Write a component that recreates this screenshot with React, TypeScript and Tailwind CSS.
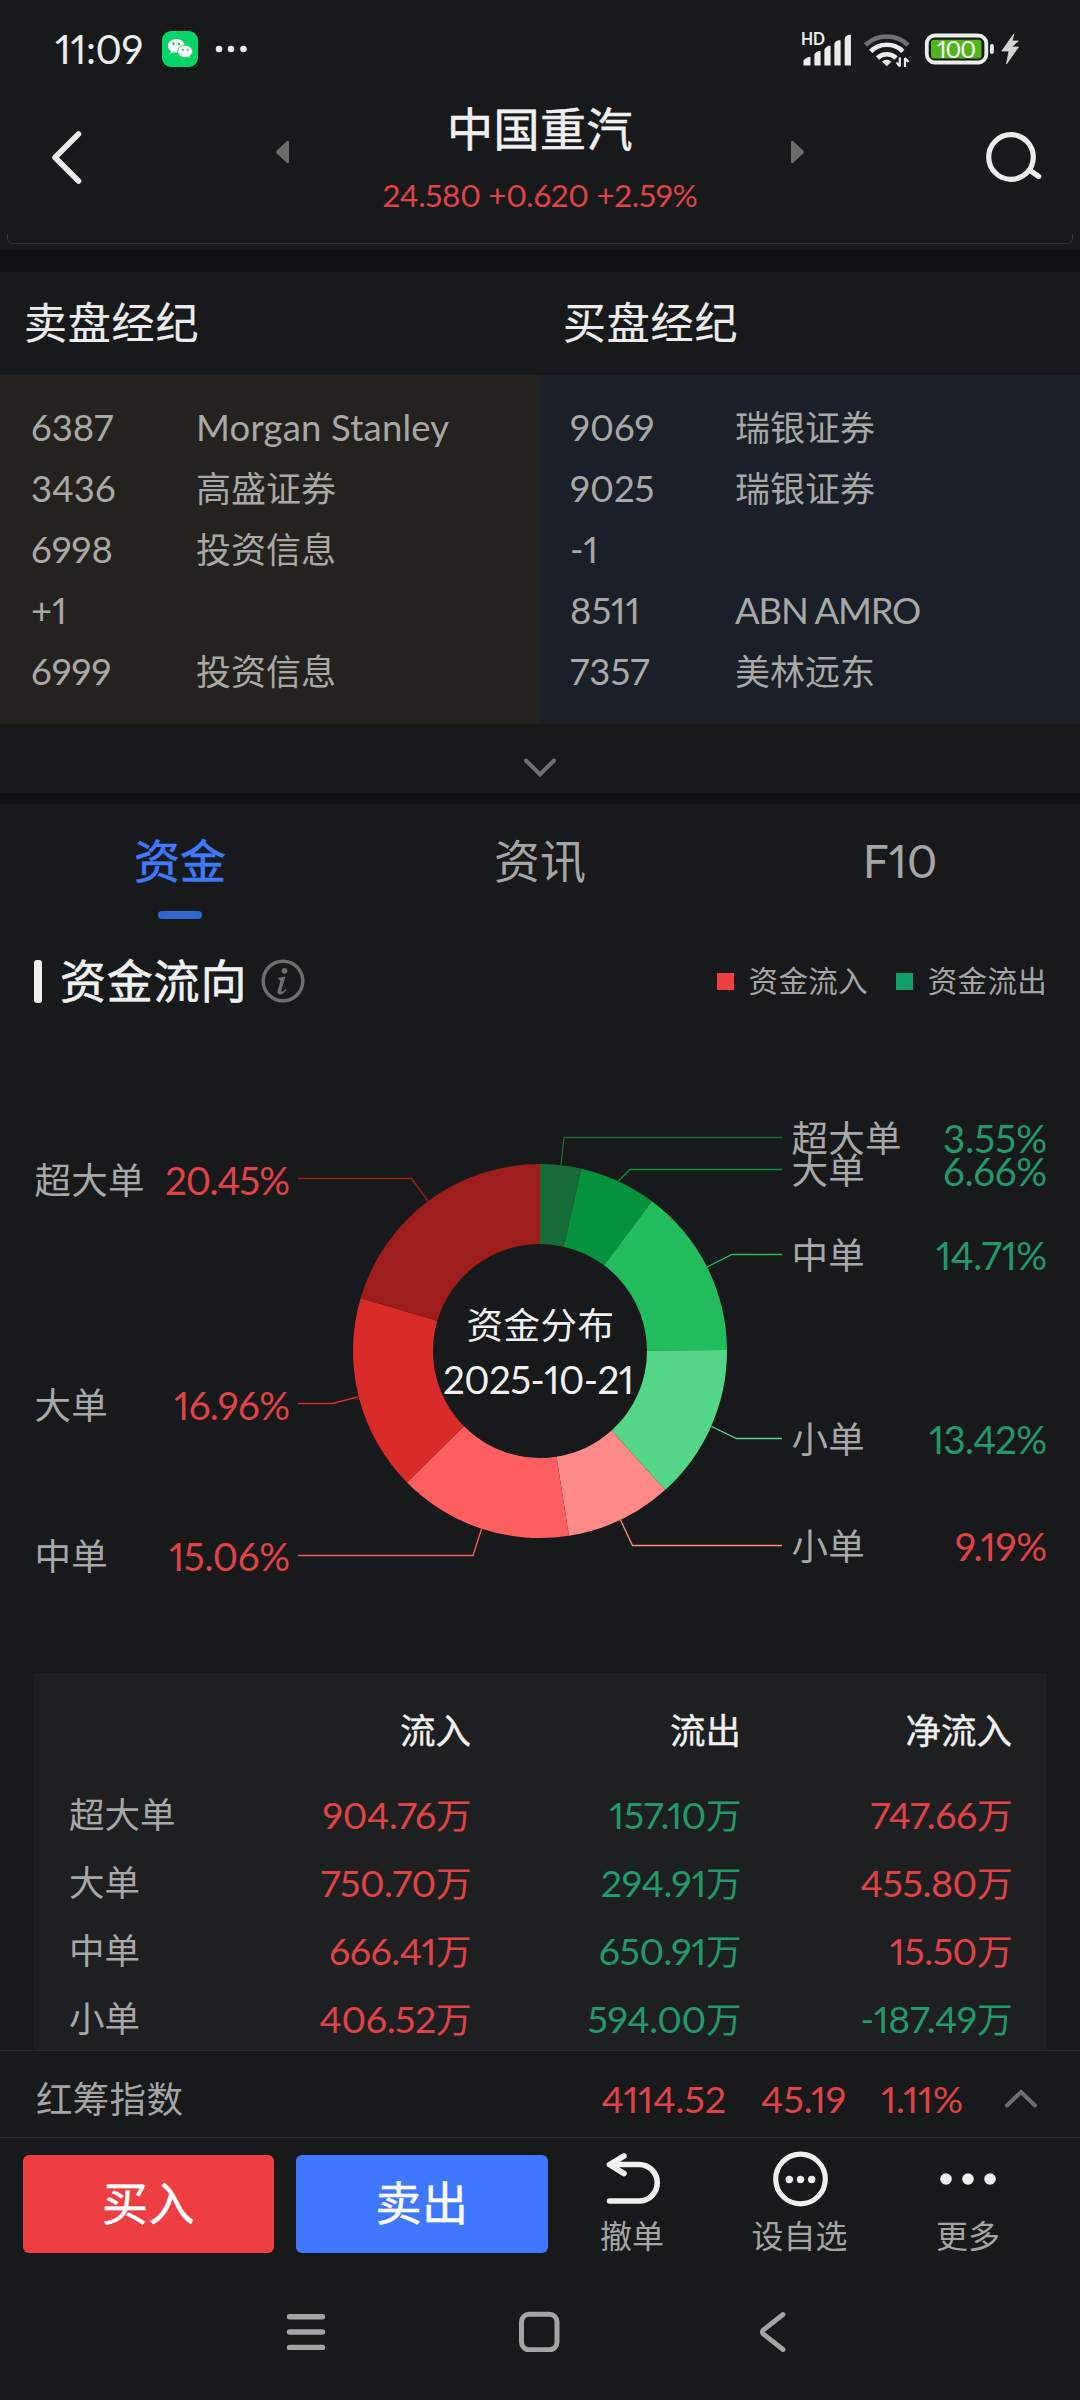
type Broker = { code: string; name?: string };

const sellBrokers: Broker[] = [
  { code: "6387", name: "Morgan Stanley" },
  { code: "3436", name: "高盛证券" },
  { code: "6998", name: "投资信息" },
  { code: "+1" },
  { code: "6999", name: "投资信息" },
];

const buyBrokers: Broker[] = [
  { code: "9069", name: "瑞银证券" },
  { code: "9025", name: "瑞银证券" },
  { code: "-1" },
  { code: "8511", name: "ABN AMRO" },
  { code: "7357", name: "美林远东" },
];

const RED = "#e04347";
const GREEN = "#22996a";

// slices run clockwise from 12 o'clock, y values are relative to the chart box
const slices = [
  { name: "超大单", value: 3.55, fill: "#156c36", text: GREEN, width: 104, y: 88, line: "782,86.5 564,86.5 561,114" },
  { name: "大单", value: 6.66, fill: "#04923c", text: GREEN, width: 104, y: 120.5, line: "782,118.5 630,118.5 618.5,130" },
  { name: "中单", value: 14.71, fill: "#23bd5e", text: GREEN, width: 111, y: 205, line: "782,203.5 732,203.5 707,216" },
  { name: "小单", value: 13.42, fill: "#54d688", text: GREEN, width: 118, y: 389, line: "782,387.5 736.5,387.5 711.5,375.5" },
  { name: "小单", value: 9.19, fill: "#ff8a87", text: RED, width: 92, y: 496, line: "782,494.5 632.5,494.5 620.5,469" },
  { name: "中单", value: 15.06, fill: "#fd5e60", text: RED, width: 121, y: 506, left: true, line: "298,504.5 473,504.5 481.5,478" },
  { name: "大单", value: 16.96, fill: "#d92b28", text: RED, width: 116, y: 355, left: true, line: "298,352.5 332,352.5 358,346" },
  { name: "超大单", value: 20.45, fill: "#9c1d1b", text: RED, width: 125, y: 130, left: true, line: "298,127.5 411.5,127.5 428,150" },
];

const flows = [
  { name: "超大单", in: "904.76", out: "157.10", net: "747.66" },
  { name: "大单", in: "750.70", out: "294.91", net: "455.80" },
  { name: "中单", in: "666.41", out: "650.91", net: "15.50" },
  { name: "小单", in: "406.52", out: "594.00", net: "-187.49" },
];

const CX = 540;
const CY = 300;

const arc = (from: number, to: number) => {
  const point = (pct: number, r: number) => {
    const a = (pct / 100) * Math.PI * 2;
    return `${CX + r * Math.sin(a)} ${CY - r * Math.cos(a)}`;
  };
  return `M${point(from, 187)} A187 187 0 0 1 ${point(to, 187)} L${point(to, 107)} A107 107 0 0 0 ${point(from, 107)} Z`;
};

const StatusBar = () => (
  <div className="flex h-[98px] items-center pl-[55px] pr-[60px] text-[#ececec]">
    <span className="w-[88px] text-[40px] leading-[98px] tracking-[-0.4px] whitespace-nowrap">11:09</span>
    <svg className="ml-[19px]" width="36" height="36" viewBox="0 0 36 36">
      <rect width="36" height="36" rx="9" fill="#07d467" />
      <path d="M14.3 8C9.6 8 6 11 6 14.8c0 2.1 1.1 3.9 2.9 5.2L8.2 22.8l3-1.6c1 .3 2 .4 3.1.4 4.7 0 8.4-3 8.4-6.8S19 8 14.3 8z" fill="#fff" />
      <path d="M23.2 14.3c-4.3 0-7.5 2.7-7.5 6.1s3.2 6.2 7.5 6.2c.9 0 1.8-.1 2.6-.4l2.5 1.5-.6-2.5c1.8-1.2 2.9-2.9 2.9-4.8 0-3.4-3.2-6.1-7.4-6.1z" fill="#fff" stroke="#07d467" strokeWidth="1" />
      <g fill="#07c160">
        <circle cx="11.5" cy="12.7" r="1.2" />
        <circle cx="17" cy="12.7" r="1.2" />
        <circle cx="20.8" cy="18.8" r="1" />
        <circle cx="25.6" cy="18.8" r="1" />
      </g>
    </svg>
    <svg className="ml-4" width="34" height="10" viewBox="0 0 34 10" fill="currentColor">
      <circle cx="5" cy="5" r="3.3" />
      <circle cx="17" cy="5" r="3.3" />
      <circle cx="29.5" cy="5" r="3.3" />
    </svg>
    <div className="ml-auto flex items-center">
      <svg width="112" height="40" viewBox="800 29 112 40" fill="currentColor">
        <text x="801" y="45.2" fontSize="16.5" fontWeight="700" textLength="24" lengthAdjust="spacingAndGlyphs">HD</text>
        <path d="M803.5 61q0-2 5-4h2v8.500h-7zM814.4 55q0-2 4-4h2.2v14.5h-6.2zM824.4 50q0-2 4-4.3h2.2v19.8h-6.2zM834.4 44q0-2 4-3.700h2.2v25.2h-6.2zM844.7 39q0-3 4-4.300h2.2v30.8h-6.2z" />
        <g fill="none" stroke="currentColor" strokeWidth="4.6">
          <path d="M865.5 45a31 31 0 0 1 42.6 0" stroke="#6f7071" />
          <path d="M870.8 51.3a23 23 0 0 1 32 0" />
          <path d="M877.5 58a13.5 13.5 0 0 1 18.6 0" />
        </g>
        <path d="M882 61.5q4.800-3.500 9.600 0l-4.800 4.800z" />
        <path d="M899.8 57.500v9M905 67v-9M896.5 62.500l3.500 4M908.5 62l-3.500-4" stroke="currentColor" strokeWidth="2.2" fill="none" />
      </svg>
      <svg className="ml-3" width="96" height="40" viewBox="924 29 96 40">
        <rect x="926.8" y="35.5" width="59.5" height="27" rx="8" fill="none" stroke="#ececec" strokeWidth="3.8" />
        <rect x="931" y="39.7" width="50.5" height="18.7" rx="3" fill="#52b519" />
        <text x="937" y="57.5" fontSize="24" fill="#fff" textLength="39">100</text>
        <rect x="990" y="44" width="3.8" height="10" rx="1.8" fill="#ececec" />
        <path d="M1013.8 34l-12 17h7.2l-2.5 13 12-17h-6.8l6.6-6h-6.2z" fill="#d4d4d4" stroke="#d4d4d4" strokeWidth="0.8" />
      </svg>
    </div>
  </div>
);

const Header = () => (
  <header className="flex h-[136px] items-start justify-between px-[38px]">
    <button aria-label="返回" className="pt-[29px]">
      <svg width="60" height="60" viewBox="0 0 60 60" fill="none" stroke="#ececec" strokeWidth="5.5" strokeLinecap="round" strokeLinejoin="round">
        <path d="M40.5 7L17 30.5 40.5 54" />
      </svg>
    </button>
    <div className="flex w-[530px] items-start justify-between">
      <svg className="mt-[42px]" width="14" height="24" viewBox="0 0 14 24" fill="#6c6c6c">
        <path d="M14 1.5v21Q13 24 11.5 22.5L1.5 13.3q-1-1.3 0-2.6L11.5 1.5Q13 0 14 1.5z" />
      </svg>
      <div className="flex flex-col items-center">
        <h1 className="h-[63px] text-[46px] leading-[62px] tracking-[0.5px] text-[#f0f0f0] [-webkit-text-stroke:0.6px]">中国重汽</h1>
        <p className="text-[31.5px] leading-[69px] tracking-[-0.35px] whitespace-nowrap text-[#e04347]">24.580 +0.620 +2.59%</p>
      </div>
      <svg className="mt-[42px]" width="14" height="24" viewBox="0 0 14 24" fill="#6c6c6c">
        <path d="M0 1.5v21Q1 24 2.5 22.5L12.5 13.3q1-1.3 0-2.6L2.5 1.5Q1 0 0 1.5z" />
      </svg>
    </div>
    <button aria-label="搜索" className="pt-[29px]">
      <svg width="60" height="60" viewBox="0 0 60 60" fill="none" stroke="#ececec" strokeWidth="5.2" strokeLinecap="round">
        <circle cx="29" cy="30" r="22.3" />
        <path d="M49.5 44.5l7.2 5" />
      </svg>
    </button>
  </header>
);

const BrokerPanel = ({ brokers, className }: { brokers: Broker[]; className: string }) => (
  <ul className={`h-[349px] w-1/2 pt-[23px] text-[#a8a8a6] ${className}`}>
    {brokers.map((b) => (
      <li key={b.code} className="flex h-[61px] text-[36.5px] leading-[59px]">
        <span className="w-[165px]">{b.code}</span>
        {b.name === "Morgan Stanley" && <span className="tracking-[0.2px] whitespace-nowrap">{b.name}</span>}
        {b.name === "ABN AMRO" && <span className="tracking-[-1.2px] whitespace-nowrap">{b.name}</span>}
        {b.name && !b.name.match(/[A-Z]/) && <span className="text-[35px] leading-[58px]">{b.name}</span>}
      </li>
    ))}
  </ul>
);

const Brokers = () => (
  <section className="border-y-[11px] border-t-[22px] border-[#0f1012]">
    <div className="flex h-[103px] text-[43px] leading-[101px] tracking-[0.8px] text-[#ececec] [-webkit-text-stroke:0.2px]">
      <h2 className="w-1/2 pl-6">卖盘经纪</h2>
      <h2 className="w-1/2 pl-[23px]">买盘经纪</h2>
    </div>
    <div className="flex">
      <BrokerPanel brokers={sellBrokers} className="bg-[#24221e] pl-[31px]" />
      <BrokerPanel brokers={buyBrokers} className="bg-[#1b1f27] pl-[30px]" />
    </div>
    <div className="flex h-[69px] justify-center pt-[33px]">
      <svg width="36" height="22" viewBox="0 0 36 22" fill="none" stroke="#707172" strokeWidth="4" strokeLinecap="round">
        <path d="M4 3.5l14 14 14-14" />
      </svg>
    </div>
  </section>
);

const Tabs = () => (
  <nav className="flex h-[126px] text-[46px] leading-[113px] text-[#a5a5a5]">
    <div className="flex w-1/3 flex-col items-center text-[#4079fb] [-webkit-text-stroke:0.6px]">
      <span className="h-[107px]">资金</span>
      <span className="h-2 w-11 rounded bg-[#2f66cf]" />
    </div>
    <div className="w-1/3 text-center">资讯</div>
    <div className="w-1/3 text-center">F10</div>
  </nav>
);

const FlowTitle = () => (
  <div className="flex h-[102px] items-center pl-[34px] pr-[33px]">
    <span className="h-[43px] w-2 rounded-[3px] bg-[#f0f0f0]" />
    <h2 className="ml-[18px] text-[46px] leading-[60px] tracking-[0.8px] text-[#f0f0f0] [-webkit-text-stroke:0.6px]">资金流向</h2>
    <svg className="ml-[14px]" width="44" height="44" viewBox="0 0 44 44">
      <circle cx="22" cy="22" r="19.8" fill="none" stroke="#6e6e6e" strokeWidth="3.4" />
      <circle cx="23.5" cy="11.8" r="2.9" fill="#6e6e6e" />
      <path d="M17.2 18.8q4-.2 7.2-1.3l-3.8 13q-.6 2.3.6 2.2 1.4-.2 3.2-2.7l1 .7q-3.2 4.8-6.3 4.8-3.4 0-2.5-3.8l2.7-9.3q.5-1.9-2.3-2.1z" fill="#6e6e6e" />
    </svg>
    <div className="ml-auto flex items-center text-[29.5px] leading-[48px] tracking-[0.3px] text-[#a5a5a5]">
      <span className="mr-[15px] size-[17px] bg-[#ed3e43]" />
      资金流入
      <span className="ml-[28px] mr-[15px] size-[17px] bg-[#119f69]" />
      资金流出
    </div>
  </div>
);

const FlowChart = () => {
  let total = 0;
  return (
    <svg className="block h-[641px] w-full" viewBox="0 -19 1080 641">
      {slices.map((s) => {
        const from = total;
        total += s.value;
        return (
          <g key={s.value}>
            <path d={arc(from, total)} fill={s.fill} />
            <polyline points={s.line} fill="none" stroke={s.fill} strokeWidth="1.3" />
            <text x={s.left ? 34.5 : 791.5} y={s.y + 12.5} fontSize="36.5" fill="#a8a8a8" letterSpacing="0.3">
              {s.name}
            </text>
            <text x={(s.left ? 290 : 1047) - s.width} y={s.y + 14} fontSize="38.5" fill={s.text} textLength={s.width}>
              {s.value.toFixed(2)}%
            </text>
          </g>
        );
      })}
      <g fill="#f0f0f0">
        <text x="466.5" y="287.5" fontSize="36.5" letterSpacing="0.5">资金分布</text>
        <text x="443" y="343" fontSize="38.5" textLength="191">2025-10-21</text>
      </g>
    </svg>
  );
};

const FlowTable = () => (
  <div className="ml-[34px] mr-[33px] h-[377px] overflow-hidden bg-[#1e1f21] pl-[35px] pt-[25px] text-[37.5px]">
    <div className="grid h-[84px] grid-cols-[132px_270px_270px_271px] text-right text-[35.5px] leading-[66px] text-[#f0f0f0] [-webkit-text-stroke:0.4px]">
      <span />
      <span>流入</span>
      <span>流出</span>
      <span>净流入</span>
    </div>
    {flows.map((f) => (
      <div key={f.name} className="grid h-[68px] grid-cols-[132px_270px_270px_271px] text-right leading-[66px] tracking-[-0.4px]">
        <span className="text-left text-[35.5px] tracking-normal text-[#a8a8a8]">{f.name}</span>
        <span className="text-[#e04347]">{f.in}<span className="text-[35.5px]">万</span></span>
        <span className="text-[#22996a]">{f.out}<span className="text-[35.5px]">万</span></span>
        <span className={f.net.startsWith("-") ? "text-[#22996a]" : "text-[#e04347]"}>{f.net}<span className="text-[35.5px]">万</span></span>
      </div>
    ))}
  </div>
);

const IndexBar = () => (
  <div className="flex h-[88px] items-center border-y border-[#2a2b2d] pl-9 pr-[41px] text-[37.5px] leading-[86px] text-[#e04347]">
    <span className="mr-auto pt-2.5 text-[36.5px] tracking-[0.3px] text-[#a5a5a5]">红筹指数</span>
    <span className="pt-2.5">4114.52</span>
    <span className="ml-[35px] pt-2.5">45.19</span>
    <span className="ml-[35px] pt-2.5">1.11%</span>
    <svg className="ml-10 mt-[9px]" width="36" height="22" viewBox="0 0 36 22" fill="none" stroke="#6e6e6e" strokeWidth="4" strokeLinecap="round">
      <path d="M4 17.5L18 4l14 13.5" />
    </svg>
  </div>
);

const Actions = () => (
  <div className="flex h-[146px] pl-[23px] pt-[17px]">
    <button className="h-[98px] w-[251px] rounded-md bg-[#ed3e43] pb-[3px] text-[46px] tracking-[0.5px] text-white [-webkit-text-stroke:0.5px]">买入</button>
    <button className="ml-[22px] h-[98px] w-[252px] rounded-md bg-[#3f78ff] pb-[3px] text-[46px] tracking-[0.5px] text-white [-webkit-text-stroke:0.5px]">卖出</button>
    <div className="ml-px flex text-[32px] leading-[60px] text-[#a5a5a5]">
      <button className="flex w-[166px] flex-col items-center">
        <svg className="-mt-2 h-[60px] w-[60px]" viewBox="0 0 60 60" fill="none" stroke="#efefef" strokeWidth="5.6" strokeLinecap="round" strokeLinejoin="round">
          <path d="M7.5 54H37a18.2 18.2 0 0 0 0-36.500H8M22 9L7.5 17.7 22 26.500" />
        </svg>
        <span className="-mt-px">撤单</span>
      </button>
      <button className="flex w-[169px] flex-col items-center">
        <svg className="-mt-2 h-[60px] w-[60px]" viewBox="0 0 60 60" fill="#efefef">
          <circle cx="30.5" cy="32" r="24.8" fill="none" stroke="#efefef" strokeWidth="5.2" />
          <circle cx="19.3" cy="32.5" r="3.7" />
          <circle cx="30.5" cy="32.5" r="3.7" />
          <circle cx="41.7" cy="32.5" r="3.7" />
        </svg>
        <span className="-mt-px">设自选</span>
      </button>
      <button className="flex w-[168px] flex-col items-center">
        <svg className="-mt-2 h-[60px] w-[60px]" viewBox="0 0 60 60" fill="#efefef">
          <circle cx="8" cy="32" r="5.8" />
          <circle cx="30" cy="32" r="5.8" />
          <circle cx="52" cy="32" r="5.8" />
        </svg>
        <span className="-mt-px">更多</span>
      </button>
    </div>
  </div>
);

const SystemNav = () => (
  <div className="flex h-[92px] items-center pl-[284px]">
    <svg width="44" height="44" viewBox="0 0 44 44" stroke="#a3a5a5" strokeWidth="5.4" strokeLinecap="round">
      <path d="M5.5 8.7h33M5.5 24h33M5.5 39.4h33" />
    </svg>
    <svg className="ml-[189px]" width="44" height="44" viewBox="0 0 44 44" fill="none" stroke="#a3a5a5" strokeWidth="5">
      <rect x="4.5" y="6.3" width="35.5" height="35.5" rx="7.5" />
    </svg>
    <svg className="ml-[195px]" width="36" height="44" viewBox="0 0 36 44" fill="none" stroke="#a3a5a5" strokeWidth="4.8" strokeLinecap="round">
      <path d="M27 6.5L7.5 21.8q-2.500 2.200 0 4.400L27 41.500" />
    </svg>
  </div>
);

const App = () => {
  return (
    <div className="flex h-[2400px] w-[1080px] flex-col overflow-hidden bg-[#17191b] font-['Lato','Noto_Sans_CJK_SC',sans-serif] proportional-nums">
      <StatusBar />
      <Header />
      <div className="mx-[7px] mb-1.5 h-2.5 rounded-b-md border border-t-0 border-[#333537]" />
      <Brokers />
      <Tabs />
      <FlowTitle />
      <FlowChart />
      <FlowTable />
      <IndexBar />
      <Actions />
      <SystemNav />
    </div>
  );
};

export default App;
